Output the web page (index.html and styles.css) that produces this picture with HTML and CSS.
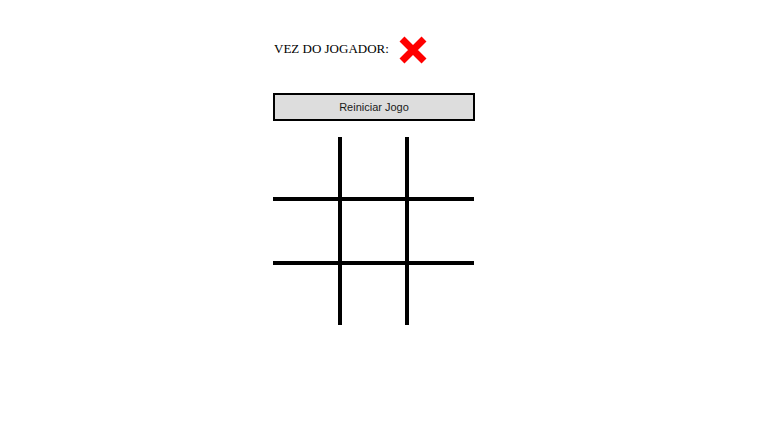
FILE: index.html
```html
<!DOCTYPE html>
<html lang="pt">
<head>
<meta charset="utf-8">
<title>Jogo da Velha</title>
<link rel="stylesheet" href="styles.css">
</head>
<body>
<main class="game">
  <div class="turn">
    <span class="turn-label">VEZ DO JOGADOR:</span>
    <svg class="turn-icon" width="30" height="30" viewBox="0 0 30 30" aria-hidden="true">
      <path d="M4 4 L26 26 M26 4 L4 26" stroke="#ff0000" stroke-width="7" fill="none"/>
    </svg>
  </div>
  <button class="restart" type="button">Reiniciar Jogo</button>
  <div class="board">
    <div class="cell"></div>
    <div class="cell mid-col"></div>
    <div class="cell"></div>
    <div class="cell mid-row"></div>
    <div class="cell mid-row mid-col"></div>
    <div class="cell mid-row"></div>
    <div class="cell"></div>
    <div class="cell mid-col"></div>
    <div class="cell"></div>
  </div>
</main>
</body>
</html>
```
FILE: styles.css
```css
html, body {
  margin: 0;
  background: #ffffff;
}
body {
  padding: 8px;
}
.game {
  width: 222px;
  margin: 0 auto;
  padding-top: 27px;
  display: flex;
  flex-direction: column;
  align-items: flex-start;
}
.turn {
  display: flex;
  align-items: center;
  gap: 9px;
  height: 30px;
  padding-left: 1px;
}
.turn-label {
  font-family: "Liberation Serif", "Times New Roman", serif;
  font-size: 13px;
  color: #000;
  position: relative;
  top: -1px;
}
.turn-icon {
  display: block;
}
.restart {
  margin-top: 28px;
  width: 202px;
  height: 28px;
  border: 2px solid #000;
  background: #dddddd;
  font-family: "Liberation Sans", Arial, sans-serif;
  font-size: 11px;
  color: #1a1a1a;
  padding: 0;
}
.board {
  margin-top: 16px;
  display: grid;
  grid-template-columns: 65px 71px 65px;
  grid-template-rows: 60px 68px 60px;
}
.cell {
  box-sizing: border-box;
}
.mid-col {
  border-left: 4px solid #000;
  border-right: 4px solid #000;
}
.mid-row {
  border-top: 4px solid #000;
  border-bottom: 4px solid #000;
}
```
